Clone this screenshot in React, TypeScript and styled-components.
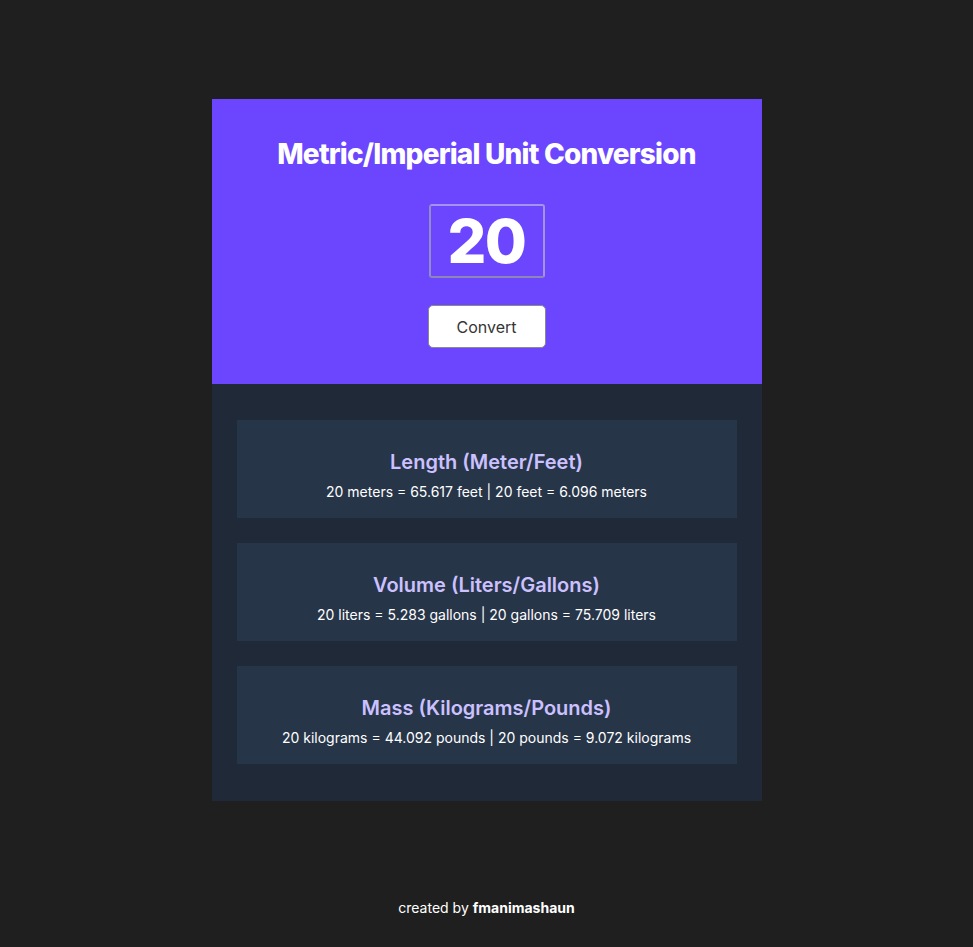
import React, { useState } from "react";
import styled, { createGlobalStyle } from "styled-components";

const Global = createGlobalStyle`
  html, body { margin: 0; padding: 0; background: #1f1f1f; }
  body { font-family: Inter, "Noto Sans", sans-serif; color: #fff; }
  * { box-sizing: border-box; }
`;

const Page = styled.div`
  display: flex;
  flex-direction: column;
  align-items: center;
  padding-top: 99px;
  min-height: 947px;
`;

const Card = styled.main`
  width: 550px;
  display: flex;
  flex-direction: column;
`;

const Header = styled.section`
  background: #6c45ff;
  display: flex;
  flex-direction: column;
  align-items: center;
  padding: 38px 0 36px;
`;

const Title = styled.h1`
  margin: 0;
  font-size: 28px;
  line-height: 34px;
  font-weight: 800;
  letter-spacing: -0.8px;
  color: #fff;
`;

const NumberInput = styled.input`
  margin-top: 33px;
  width: 116px;
  height: 74px;
  background: transparent;
  border: 2px solid #a394e8;
  border-bottom-color: #8f86b8;
  border-left-color: #958bc4;
  border-radius: 3px;
  color: #fff;
  font-family: Inter, sans-serif;
  font-size: 61px;
  font-weight: 800;
  letter-spacing: -1.5px;
  text-align: center;
  outline: none;
  padding: 0;
`;

const ConvertButton = styled.button`
  margin-top: 27px;
  width: 118px;
  height: 43px;
  background: #fff;
  border: 1px solid #8a8a8a;
  border-radius: 5px;
  color: #353535;
  font-family: Inter, sans-serif;
  font-size: 16px;
  cursor: pointer;
`;

const Results = styled.section`
  background: #1f2937;
  padding: 36px 25px 37px;
  display: flex;
  flex-direction: column;
  gap: 25px;
`;

const ResultBox = styled.article`
  background: #273549;
  height: 98px;
  padding-top: 30px;
  display: flex;
  flex-direction: column;
  align-items: center;
`;

const ResultTitle = styled.h2`
  margin: 0;
  font-size: 20px;
  font-weight: 600;
  color: #ccc1ff;
`;

const ResultText = styled.p`
  margin: 9px 0 0;
  font-size: 14px;
  font-weight: 400;
  color: #fff;
`;

const Footer = styled.footer`
  margin-top: 98px;
  font-size: 14px;
  color: #fff;
  strong { font-weight: 700; }
`;

const rows = [
  {
    title: "Length (Meter/Feet)",
    text: "20 meters = 65.617 feet | 20 feet = 6.096 meters",
  },
  {
    title: "Volume (Liters/Gallons)",
    text: "20 liters = 5.283 gallons | 20 gallons = 75.709 liters",
  },
  {
    title: "Mass (Kilograms/Pounds)",
    text: "20 kilograms = 44.092 pounds | 20 pounds = 9.072 kilograms",
  },
];

export default function App() {
  const [value, setValue] = useState("20");
  return (
    <>
      <Global />
      <Page>
        <Card>
          <Header>
            <Title>Metric/Imperial Unit Conversion</Title>
            <NumberInput value={value} onChange={(e) => setValue(e.target.value)} />
            <ConvertButton>Convert</ConvertButton>
          </Header>
          <Results>
            {rows.map((r) => (
              <ResultBox key={r.title}>
                <ResultTitle>{r.title}</ResultTitle>
                <ResultText>{r.text}</ResultText>
              </ResultBox>
            ))}
          </Results>
        </Card>
        <Footer>
          created by <strong>fmanimashaun</strong>
        </Footer>
      </Page>
    </>
  );
}
